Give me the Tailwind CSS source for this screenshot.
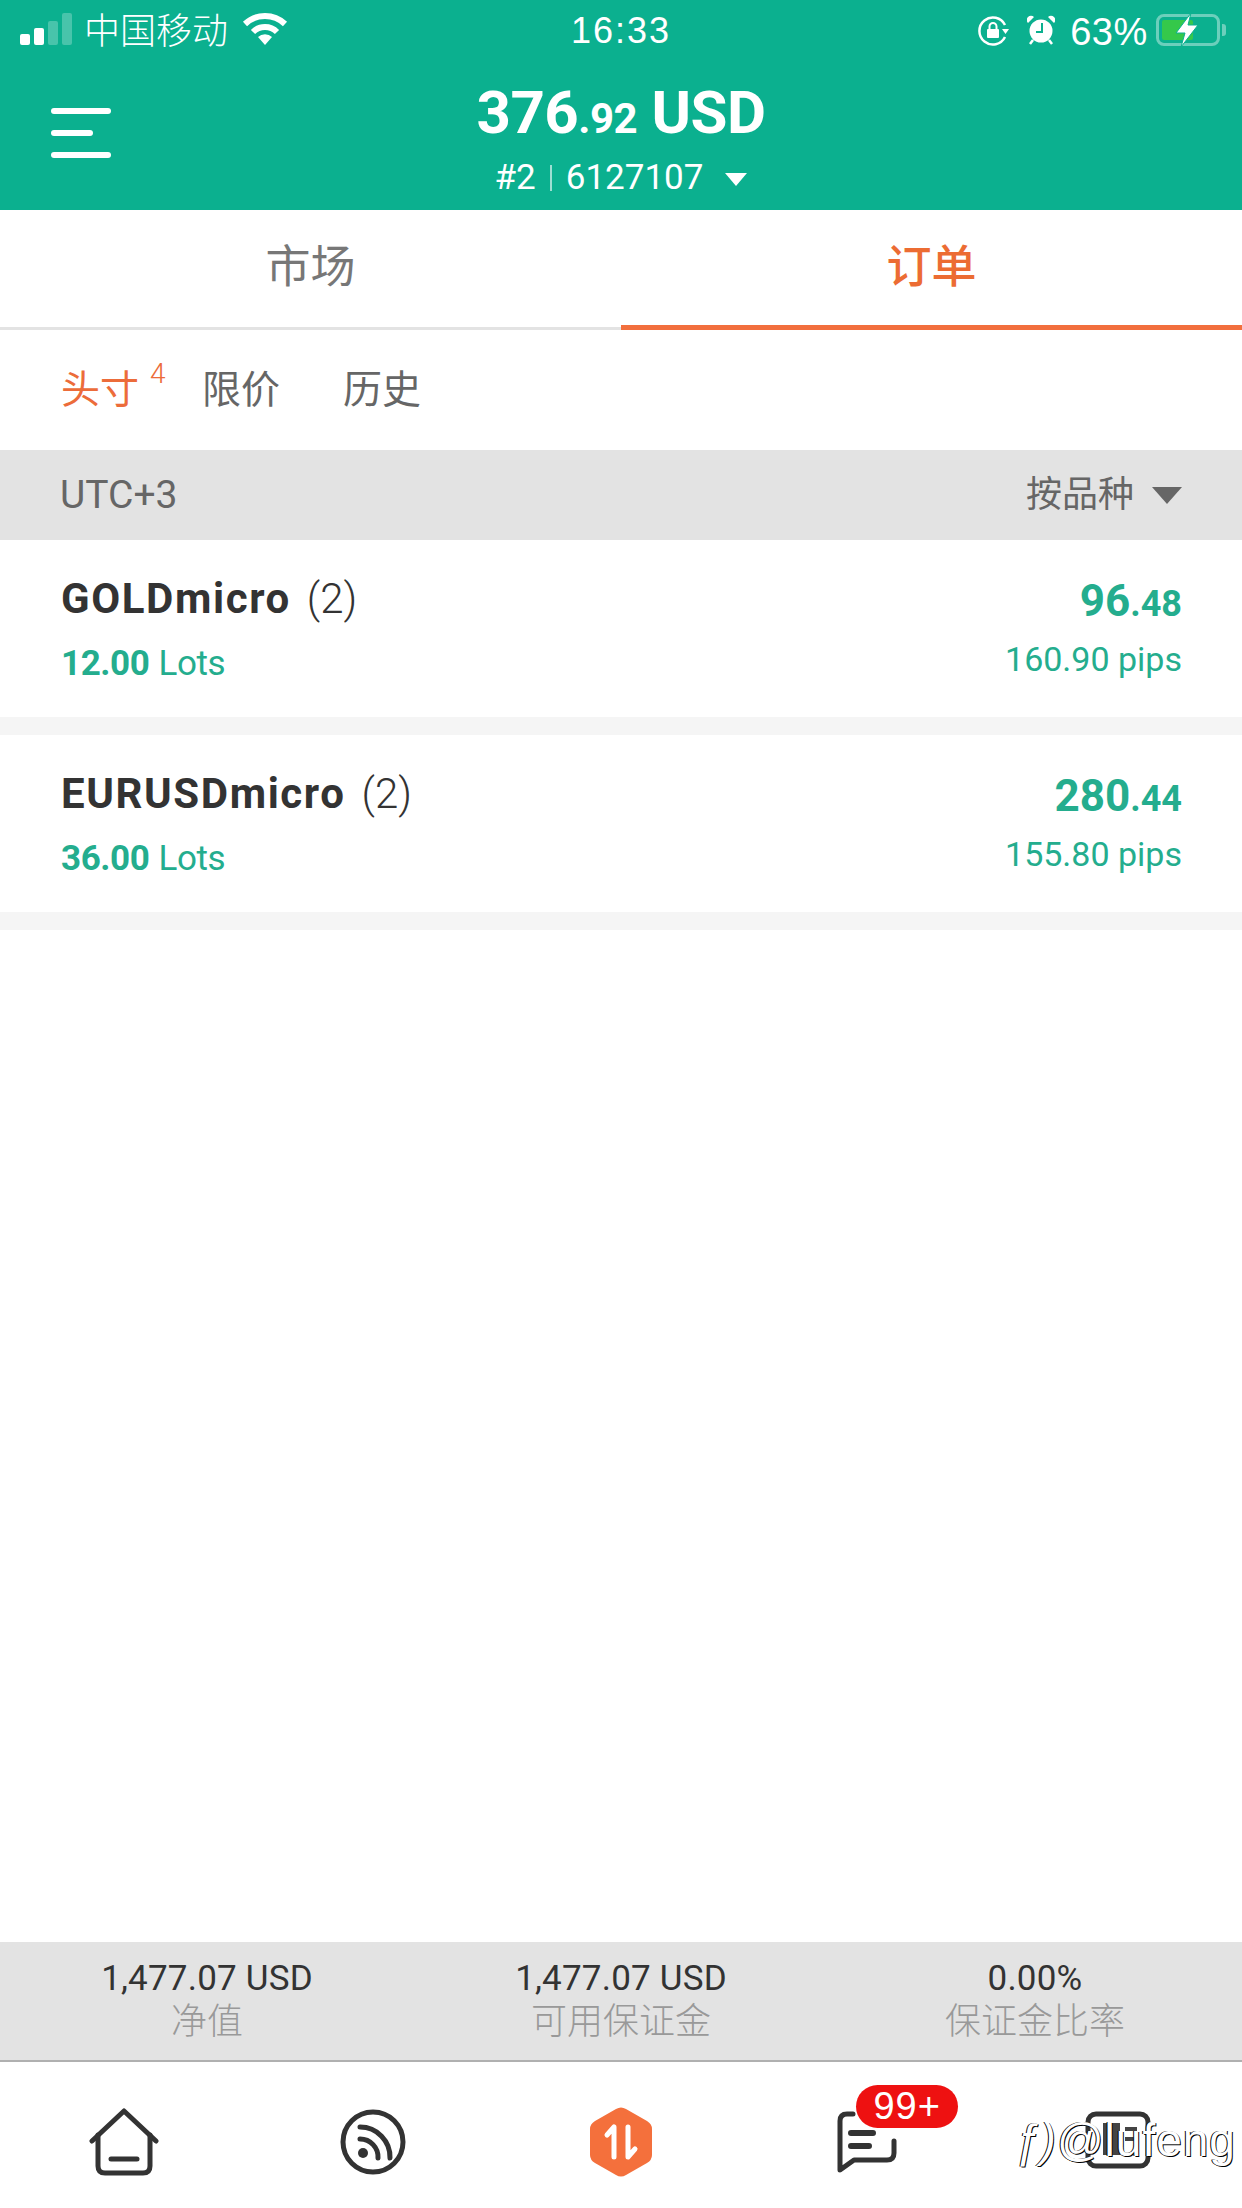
<!DOCTYPE html>
<html lang="zh-CN">
<head>
<meta charset="UTF-8">
<meta name="viewport" content="width=device-width, initial-scale=1.0">
<title>Orders</title>
<script src="https://cdn.jsdelivr.net/npm/@tailwindcss/browser@4"></script>
</head>
<body class="bg-white">
<div class="relative flex flex-col w-[1242px] h-[2208px] overflow-hidden bg-white text-[#333] font-['Roboto','Noto_Sans_CJK_SC',sans-serif]">

  <!-- green header -->
  <header class="h-[210px] shrink-0 bg-[#0bb08f] text-white flex flex-col">
    <div class="relative h-[60px] flex items-center justify-between pl-[20px] pr-[16px] font-['Liberation_Sans','Noto_Sans_CJK_SC',sans-serif]">
      <div class="flex items-center">
        <div class="flex items-end gap-[4px] h-[32px] mt-[-2px]">
          <span class="w-[10px] h-[11px] rounded-[2px] bg-white"></span>
          <span class="w-[10px] h-[17px] rounded-[2px] bg-white"></span>
          <span class="w-[10px] h-[24px] rounded-[2px] bg-white/25"></span>
          <span class="w-[10px] h-[32px] rounded-[2px] bg-white/25"></span>
        </div>
        <span class="ml-[12px] mt-[3px] text-[36px] leading-[44px] font-light">中国移动</span>
        <svg class="ml-[14px] mt-[-3px]" width="46" height="32" viewBox="0 0 46 32" fill="none" stroke="white" stroke-width="6">
          <path d="M3 11 A29 29 0 0 1 43 11"/>
          <path d="M11 19 A17 17 0 0 1 35 19"/>
          <path d="M16 24 L23 32 L30 24 A10 10 0 0 0 16 24Z" fill="white" stroke="none"/>
        </svg>
      </div>
      <span class="absolute left-[561px] top-[9px] w-[120px] text-center text-[36px] leading-[44px] tracking-[2px]">16:33</span>
      <div class="flex items-center">
        <svg width="32" height="30" viewBox="0 0 32 30" fill="none" stroke="white" stroke-width="2.5" class="mt-[2px]">
          <path d="M28 9 A13.5 13.5 0 1 0 28 21"/>
          <path d="M25 13 L32 13 L28.5 18Z" fill="white" stroke="none"/>
          <rect x="10" y="13" width="12" height="9" rx="1" fill="white" stroke="none"/>
          <path d="M12.5 13 V10.5 A3.5 3.5 0 0 1 19.5 10.5 V13" stroke-width="2"/>
        </svg>
        <svg class="ml-[18px]" width="28" height="30" viewBox="0 0 28 30" fill="white">
          <circle cx="14" cy="16" r="11.5"/>
          <path d="M1 8 L7 2 A4 4 0 0 0 1 8Z M27 8 L21 2 A4 4 0 0 1 27 8Z"/>
          <path d="M6 25 L3 29 M22 25 L25 29" stroke="white" stroke-width="2.5"/>
          <path d="M15 8 V17 H9" fill="none" stroke="#0bb08f" stroke-width="2"/>
        </svg>
        <span class="ml-[15px] mt-[3px] text-[38px] leading-[44px] font-light tracking-[0.6px]">63%</span>
        <div class="relative ml-[8px] flex items-center">
          <div class="w-[64px] h-[32px] rounded-[8px] border-[3px] border-white/40 p-[3px] flex">
            <span class="block w-[31px] h-full bg-[#35c84a] rounded-[2px]"></span>
          </div>
          <span class="ml-[2px] w-[4px] h-[12px] rounded-r-[3px] bg-white/40"></span>
          <svg class="absolute left-[18px] top-[-1px]" width="25" height="34" viewBox="0 0 25 34" fill="white" stroke="#0bb08f" stroke-width="1">
            <path d="M17 0 L2 20 H11 L7 34 L24 12 H14 Z"/>
          </svg>
        </div>
      </div>
    </div>
    <div class="relative flex-1 flex flex-col items-center">
      <button class="absolute left-[51px] top-[48px] flex flex-col gap-[16px]">
        <span class="block w-[60px] h-[6px] rounded-full bg-white"></span>
        <span class="block w-[42px] h-[6px] rounded-full bg-white"></span>
        <span class="block w-[60px] h-[6px] rounded-full bg-white"></span>
      </button>
      <div class="mt-[28px] h-[50px] leading-[50px] font-bold text-[60px] tracking-[-0.5px]">376<span class="text-[42px]">.92</span> USD</div>
      <div class="mt-[18px] flex items-center h-[44px] text-[35px] leading-[44px]">
        <span>#2</span><span class="mx-[14px] w-[2px] h-[26px] bg-white/60"></span><span>6127107</span>
        <span class="ml-[22px] mt-[2px] w-0 h-0 border-x-[11px] border-x-transparent border-t-[13px] border-t-white"></span>
      </div>
    </div>
  </header>

  <!-- main tabs -->
  <nav class="h-[120px] shrink-0 grid grid-cols-2 text-[45px] leading-[60px] text-center">
    <div class="border-b-[3px] border-[#e3e3e3] pt-[28px] text-[#777]">市场</div>
    <div class="border-b-[5px] border-[#f26f3d] pt-[28px] text-[#ec6c33] font-medium">订单</div>
  </nav>

  <!-- sub tabs -->
  <div class="h-[120px] shrink-0 flex pl-[61px] pt-[35px] text-[39px] leading-[50px] text-[#666]">
    <div class="relative w-[141px] text-[#ec6c3a]">头寸<span class="absolute left-[89px] top-[-11px] text-[28px] leading-[40px] font-light">4</span></div>
    <div class="w-[141px]">限价</div>
    <div>历史</div>
  </div>

  <!-- group bar -->
  <div class="h-[90px] shrink-0 bg-[#e3e3e3] flex items-center justify-between pl-[60px] pr-[60px] text-[36px] text-[#666]">
    <span class="text-[39px]">UTC+3</span>
    <div class="flex items-center">
      <span>按品种</span>
      <span class="ml-[18px] w-0 h-0 border-x-[15px] border-x-transparent border-t-[17px] border-t-[#666]"></span>
    </div>
  </div>

  <!-- positions -->
  <section class="h-[177px] shrink-0 flex justify-between pl-[61px] pr-[60px] pt-[34px]">
    <div>
      <div class="h-[50px] leading-[50px] text-[42px] font-bold tracking-[1.6px]">GOLDmicro<span class="ml-[16px] font-light tracking-normal">(2)</span></div>
      <div class="mt-[18px] h-[44px] leading-[44px] text-[35px] text-[#24ad8e] tracking-[-0.4px]"><b class="font-bold">12.00</b><span class="ml-[9px]">Lots</span></div>
    </div>
    <div class="text-right text-[#24ad8e]">
      <div class="mt-[2px] h-[50px] leading-[50px] text-[44px] font-bold">96<span class="text-[36px]">.48</span></div>
      <div class="mt-[11px] h-[44px] leading-[44px] text-[34px]">160.90 pips</div>
    </div>
  </section>
  <div class="h-[18px] shrink-0 bg-[#f5f5f5]"></div>
  <section class="h-[177px] shrink-0 flex justify-between pl-[61px] pr-[60px] pt-[34px]">
    <div>
      <div class="h-[50px] leading-[50px] text-[42px] font-bold tracking-[1.6px]">EURUSDmicro<span class="ml-[16px] font-light tracking-normal">(2)</span></div>
      <div class="mt-[18px] h-[44px] leading-[44px] text-[35px] text-[#24ad8e] tracking-[-0.4px]"><b class="font-bold">36.00</b><span class="ml-[9px]">Lots</span></div>
    </div>
    <div class="text-right text-[#24ad8e]">
      <div class="mt-[2px] h-[50px] leading-[50px] text-[44px] font-bold">280<span class="text-[36px]">.44</span></div>
      <div class="mt-[11px] h-[44px] leading-[44px] text-[34px]">155.80 pips</div>
    </div>
  </section>
  <div class="h-[18px] shrink-0 bg-[#f5f5f5]"></div>

  <div class="flex-1"></div>

  <!-- account summary -->
  <div class="h-[120px] shrink-0 bg-[#e3e3e3] border-b-[2px] border-[#b0b0b0] grid grid-cols-3 text-center pt-[17px]">
    <div>
      <div class="h-[40px] leading-[40px] text-[35px] tracking-[0.2px]">1,477.07 USD</div>
      <div class="mt-[1px] h-[44px] leading-[44px] text-[36px] text-[#999] font-light">净值</div>
    </div>
    <div>
      <div class="h-[40px] leading-[40px] text-[35px] tracking-[0.2px]">1,477.07 USD</div>
      <div class="mt-[1px] h-[44px] leading-[44px] text-[36px] text-[#999] font-light">可用保证金</div>
    </div>
    <div>
      <div class="h-[40px] leading-[40px] text-[35px] tracking-[0.2px]">0.00%</div>
      <div class="mt-[1px] h-[44px] leading-[44px] text-[36px] text-[#999] font-light">保证金比率</div>
    </div>
  </div>

  <!-- bottom nav -->
  <nav class="h-[146px] shrink-0 grid grid-cols-5 items-center text-[#333]">
    <div class="flex justify-center mt-[14px]">
      <svg width="70" height="68" viewBox="0 0 70 68" fill="none" stroke="#333" stroke-width="5" stroke-linecap="round" stroke-linejoin="round">
        <path d="M3 33 L35 3 L67 33"/>
        <path d="M9 27 V58 Q9 65 16 65 H54 Q61 65 61 58 V27"/>
        <path d="M22 51 H48"/>
      </svg>
    </div>
    <div class="flex justify-center mt-[14px]">
      <svg width="66" height="66" viewBox="0 0 66 66" fill="none" stroke="#333" stroke-width="5" stroke-linecap="round">
        <circle cx="33" cy="33" r="30"/>
        <path d="M20 18 A30 30 0 0 1 50 49"/>
        <path d="M20 30 A18 18 0 0 1 38 49"/>
        <circle cx="23" cy="44" r="5" fill="#333" stroke="none"/>
      </svg>
    </div>
    <div class="flex justify-center mt-[14px]">
      <svg width="62" height="70" viewBox="0 0 62 70" fill="#f4703c">
        <path d="M26 2 Q31 -1 36 2 L57 14 Q62 17 62 22 V48 Q62 53 57 56 L36 68 Q31 71 26 68 L5 56 Q0 53 0 48 V22 Q0 17 5 14Z"/>
        <path d="M17 28 L24 20 V50 M38 20 V50 L45 42" fill="none" stroke="white" stroke-width="5" stroke-linecap="round" stroke-linejoin="round"/>
      </svg>
    </div>
    <div class="relative flex justify-center mt-[14px]">
      <svg class="ml-[-4px]" width="60" height="62" viewBox="0 0 60 62" fill="none" stroke="#333" stroke-width="5" stroke-linecap="round" stroke-linejoin="round">
        <path d="M16 3 H10 Q3 3 3 10 V59 L17 49 H50 Q57 49 57 42 V30"/>
        <path d="M14 22 H36 M14 35 H32" stroke-width="6"/>
      </svg>
      <span class="absolute left-[111px] top-[-26px] w-[102px] h-[43px] rounded-full bg-[#ee1111] text-white text-center text-[38px] leading-[43px] tracking-[1px] font-['Liberation_Sans',sans-serif]">99+</span>
    </div>
    <div class="flex justify-center mt-[10px]">
      <svg width="66" height="58" viewBox="0 0 66 58" fill="none" stroke="#333" stroke-width="5">
        <rect x="3" y="3" width="60" height="52" rx="8"/>
        <path d="M20 14 H33 V42 H20Z M40 18 H52 M40 28 H52" fill="#444" stroke="#444" stroke-width="4"/>
      </svg>
    </div>
  </nav>

  <!-- watermark -->
  <div class="absolute left-[1014px] top-[2110px] text-[46px] leading-[60px] tracking-[1px] text-white font-light [text-shadow:1px_1px_0_#000,-1px_0_0_#000] font-['Liberation_Sans',sans-serif] whitespace-nowrap"><i>ƒ)</i>@lufeng</div>
</div>
</body>
</html>
